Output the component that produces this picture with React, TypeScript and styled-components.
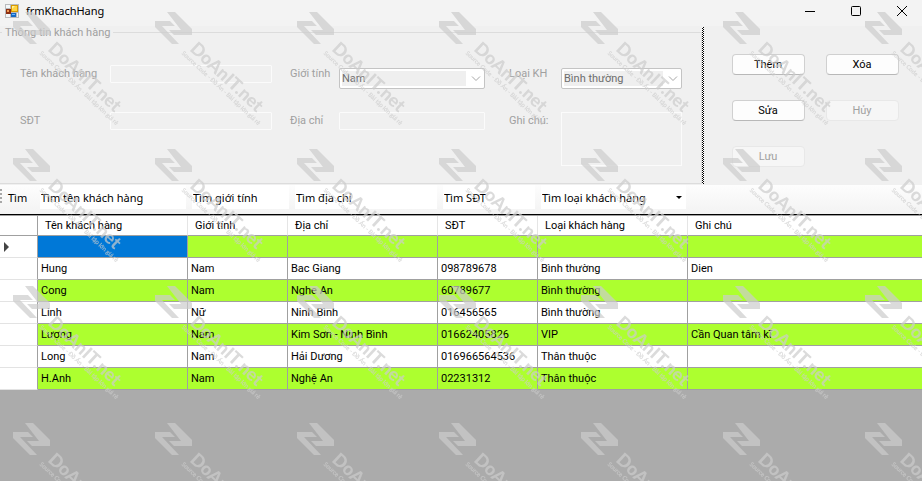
import React from "react";
import styled, { createGlobalStyle } from "styled-components";

const GlobalStyle = createGlobalStyle`
  *, *::before, *::after { box-sizing: border-box; }
  body { margin: 0; font-family: Roboto, "Liberation Sans", sans-serif; font-size: 11px; color: #000; }
  button, input, select, textarea { font: inherit; margin: 0; }
`;

const Window = styled.div`
  position: relative;
  display: flex;
  flex-direction: column;
  min-height: 100vh;
  overflow: hidden;
  background: #ababab;
`;

const TitleBar = styled.header`
  display: flex;
  align-items: center;
  height: 26px;
  padding: 0 0 5px 5px;
  background: #f3f3f3;
  font-family: "Noto Sans", sans-serif;
`;

const Title = styled.h1`
  flex: 1;
  margin: 0 0 0 7px;
  font-size: 11px;
  line-height: 20px;
  font-weight: 400;
`;

const WindowControls = styled.div`
  display: flex;
  gap: 6px;
`;

const WindowButton = styled.button`
  display: flex;
  align-items: center;
  justify-content: center;
  width: 40px;
  height: 20px;
  padding: 0;
  border: 0;
  background: transparent;
`;

const TopPanel = styled.section`
  display: flex;
  height: 159px;
  padding-bottom: 1px;
  background: #f0f0f0;
`;

const CustomerGroup = styled.fieldset`
  flex: 1;
  min-width: 0;
  margin: 0;
  padding: 26px 19px 0 20px;
  border: 1px solid #dcdcdc;
  border-left: 0;
  color: #a0a0a0;
`;

const Legend = styled.legend`
  margin-left: -18px;
  padding: 0 3px;
  line-height: 13px;
`;

const FormGrid = styled.div`
  display: grid;
  grid-template-columns: 90px 162fr 67px 146fr 76px 121fr;
  grid-template-rows: 24px 55px;
  row-gap: 23px;
  align-items: start;
`;

const FieldLabel = styled.label<{ $indent?: number }>`
  padding-left: ${(p) => p.$indent ?? 0}px;
  line-height: 18px;
  white-space: nowrap;
`;

const TextField = styled.input`
  width: 100%;
  height: 18px;
  padding: 0 3px;
  border: 1px solid #fbfbfb;
  border-radius: 1px;
  background: #f0f0f0;
`;

const NoteField = styled.textarea`
  width: 100%;
  height: 54px;
  padding: 3px;
  resize: none;
  border: 1px solid #fbfbfb;
  background: #f0f0f0;
`;

const SelectBox = styled.div`
  position: relative;
  align-self: end;
  svg {
    position: absolute;
    right: 4px;
    top: 8px;
    pointer-events: none;
  }
`;

const Select = styled.select`
  display: block;
  width: 100%;
  height: 21px;
  padding: 0 20px 0 2px;
  appearance: none;
  border: 1px solid #c4c4c4;
  border-radius: 2px;
  color: #6d6d6d;
  opacity: 1;
  background: linear-gradient(#efefef, #efefef) 2px 2px / calc(100% - 20px) calc(100% - 4px) no-repeat #fff;
`;

const Splitter = styled.div`
  width: 2px;
  margin-top: 1px;
  background: repeating-conic-gradient(#000 0 25%, #fff 0 50%) 0 0 / 2px 2px;
`;

const Actions = styled.div`
  display: grid;
  grid-template-columns: 73px 73px;
  grid-auto-rows: 21px;
  gap: 25px 21px;
  width: 218px;
  padding: 28px 0 0 28px;
`;

const ActionButton = styled.button`
  padding: 0 1px 1px 0;
  border: 1px solid #d0d0d0;
  border-bottom-color: #b8b8b8;
  border-radius: 4px;
  background: #fdfdfd;
  color: #000;
  &:disabled {
    border-color: #e8e8e8;
    background: #f6f6f6;
    color: #a0a0a0;
  }
`;

const SearchBar = styled.form`
  display: flex;
  align-items: center;
  height: 30px;
  padding-bottom: 5px;
  border-bottom: 1px solid #000;
  background: linear-gradient(#fdfdfd, #f3f3f3);
  font-family: "Noto Sans", sans-serif;
`;

const Grip = styled.span`
  width: 3px;
  height: 16px;
  background: repeating-linear-gradient(#a8a8a8 0 2px, transparent 2px 4px) 0 0 / 2px 100% no-repeat;
`;

const SearchButton = styled.button`
  width: 34px;
  padding: 0 0 0 5px;
  border: 0;
  background: transparent;
  text-align: left;
`;

const SearchItem = styled.div<{ $width: number }>`
  position: relative;
  display: flex;
  align-items: center;
  width: ${(p) => p.$width}px;
  height: 24px;
  padding: 0 3px;
  & + &::before {
    content: "";
    position: absolute;
    left: -1px;
    height: 16px;
    border-left: 1px solid #bdbdbd;
  }
  svg {
    position: absolute;
    right: 7px;
    pointer-events: none;
  }
`;

const SearchInput = styled.input`
  width: 100%;
  height: 24px;
  padding: 0 1px;
  border: 0;
  background: #fff;
`;

const SearchSelect = styled.select`
  width: 100%;
  height: 24px;
  padding: 0 1px;
  border: 0;
  appearance: none;
  background: #fff;
`;

const Table = styled.table`
  width: 100%;
  table-layout: fixed;
  border-collapse: separate;
  border-spacing: 0;
  background: #fff;
  border-top: 1px solid #a0a0a0;
`;

const HeadCell = styled.th`
  height: 20px;
  padding: 0 7px;
  border-right: 1px solid #e5e5e5;
  border-bottom: 1px solid #a0a0a0;
  text-align: left;
  font-weight: 400;
  line-height: 18px;
  &:first-child { border-right-color: #a0a0a0; }
  &:last-child { border-right: 0; }
`;

const RowHead = styled.th`
  height: 22px;
  padding: 0 0 0 4px;
  border-right: 1px solid #a0a0a0;
  border-bottom: 1px solid #e3e3e3;
  text-align: left;
  svg { display: block; }
`;

const Cell = styled.td<{ $selected?: boolean }>`
  padding: 1px 3px 0;
  border-right: 1px solid #a0a0a0;
  border-bottom: 1px solid #a0a0a0;
  line-height: 20px;
  white-space: nowrap;
  overflow: hidden;
  background: ${(p) => (p.$selected ? "#0078d7" : "transparent")};
  &:last-child { border-right: 0; }
`;

const Row = styled.tr`
  &:nth-child(odd) > td:not([aria-selected="true"]) { background: #adff2f; }
`;

const Overlay = styled.svg`
  position: absolute;
  inset: 0;
  width: 100%;
  height: 100%;
  pointer-events: none;
`;

const customers = [
  ["", "", "", "", "", ""],
  ["Hung", "Nam", "Bac Giang", "098789678", "Bình thường", "Dien"],
  ["Cong", "Nam", "Nghe An", "60789677", "Bình thường", ""],
  ["Linh", "Nữ", "Ninh Bình", "016456565", "Bình thường", ""],
  ["Lượng", "Nam", "Kim Sơn - Ninh Bình", "01662405826", "VIP", "Cần Quan tâm kĩ"],
  ["Long", "Nam", "Hải Dương", "016966564536", "Thân thuộc", ""],
  ["H.Anh", "Nam", "Nghệ An", "02231312", "Thân thuộc", ""],
];

const headings = ["Tên khách hàng", "Giới tính", "Địa chỉ", "SĐT", "Loại khách hàng", "Ghi chú"];

const searches = [
  { label: "Tìm tên khách hàng", width: 152 },
  { label: "Tìm giới tính", width: 103 },
  { label: "Tìm địa chỉ", width: 148 },
  { label: "Tìm SĐT", width: 98 },
];

const FormIcon = () => (
  <svg width="14" height="14" viewBox="0 0 14 14" aria-hidden="true">
    <rect width="14" height="14" fill="#b9bbbd" />
    <path d="M1 1h4v3H1zM1 10h4v3H1zM12 9h1v4h-1z" fill="#f4f6f8" />
    <rect x="6" y="1" width="7" height="7" fill="#d99a00" />
    <rect x="7" y="2" width="5" height="5" fill="#ffd541" />
    <path d="M7 2h3L7 5z" fill="#fff0a0" />
    <rect x="1" y="5" width="5" height="5" fill="#8d2f12" />
    <rect x="2" y="6" width="2" height="2" fill="#ee9a55" />
    <rect x="6" y="9" width="5" height="4" fill="#1769c4" />
    <rect x="7" y="10" width="3" height="1" fill="#69b8ff" />
  </svg>
);

const Chevron = () => (
  <svg width="10" height="6" viewBox="0 0 10 6" fill="none" stroke="#a6a6a6" aria-hidden="true">
    <path d="M1 .5 5 4.5 9 .5" />
  </svg>
);

const Watermark = () => (
  <Overlay aria-hidden="true">
    <defs>
      <pattern id="mark" width="142" height="137" patternUnits="userSpaceOnUse">
        <g fill="#ccc" opacity="0.7">
          <path d="M25 12h8l17 17v6H32l-5-5h12z" />
          <path d="M13 21h15l5 5H20l17 18h-7L13 27z" />
          <g transform="translate(47 50) rotate(43)" fontFamily="Lato, sans-serif">
            <text fontSize="18" fontWeight="900">DoAnIT.net</text>
            <text x="-3" y="8" fontSize="6" stroke="#ccc" strokeWidth="0.2">Source Code - Đồ Án - Bài tập lớn giá rẻ</text>
          </g>
        </g>
      </pattern>
    </defs>
    <rect width="100%" height="100%" fill="url(#mark)" />
  </Overlay>
);

export default function App() {
  return (
    <Window>
      <GlobalStyle />
      <TitleBar>
        <FormIcon />
        <Title>frmKhachHang</Title>
        <WindowControls>
          <WindowButton aria-label="Minimize">
            <svg width="10" height="10"><path d="M0 5.5h10" stroke="#000" /></svg>
          </WindowButton>
          <WindowButton aria-label="Maximize">
            <svg width="10" height="10"><rect x=".5" y=".5" width="9" height="9" rx="1" fill="none" stroke="#000" /></svg>
          </WindowButton>
          <WindowButton aria-label="Close">
            <svg width="10" height="10"><path d="m0 0 10 10M10 0 0 10" stroke="#000" /></svg>
          </WindowButton>
        </WindowControls>
      </TitleBar>

      <TopPanel>
        <CustomerGroup>
          <Legend>Thông tin khách hàng</Legend>
          <FormGrid>
            <FieldLabel htmlFor="name">Tên khách hàng</FieldLabel>
            <TextField id="name" disabled />
            <FieldLabel htmlFor="gender" $indent={18}>Giới tính</FieldLabel>
            <SelectBox>
              <Select id="gender" disabled><option>Nam</option></Select>
              <Chevron />
            </SelectBox>
            <FieldLabel htmlFor="kind" $indent={24}>Loại KH</FieldLabel>
            <SelectBox>
              <Select id="kind" disabled><option>Bình thường</option></Select>
              <Chevron />
            </SelectBox>
            <FieldLabel htmlFor="phone">SĐT</FieldLabel>
            <TextField id="phone" disabled />
            <FieldLabel htmlFor="address" $indent={18}>Địa chỉ</FieldLabel>
            <TextField id="address" disabled />
            <FieldLabel htmlFor="note" $indent={24}>Ghi chú:</FieldLabel>
            <NoteField id="note" disabled />
          </FormGrid>
        </CustomerGroup>
        <Splitter />
        <Actions>
          <ActionButton>Thêm</ActionButton>
          <ActionButton>Xóa</ActionButton>
          <ActionButton>Sửa</ActionButton>
          <ActionButton disabled>Hủy</ActionButton>
          <ActionButton disabled>Lưu</ActionButton>
        </Actions>
      </TopPanel>

      <SearchBar onSubmit={(e) => e.preventDefault()}>
        <Grip />
        <SearchButton>Tìm</SearchButton>
        {searches.map((s) => (
          <SearchItem key={s.label} $width={s.width}>
            <SearchInput aria-label={s.label} defaultValue={s.label} />
          </SearchItem>
        ))}
        <SearchItem $width={151}>
          <SearchSelect aria-label="Tìm loại khách hàng">
            <option>Tìm loại khách hàng</option>
          </SearchSelect>
          <svg width="6" height="3" aria-hidden="true"><path d="M0 0h6L3 3z" /></svg>
        </SearchItem>
      </SearchBar>

      <Table>
        <colgroup>
          <col style={{ width: 38 }} />
          <col style={{ width: 150 }} />
          <col style={{ width: 100 }} />
          <col style={{ width: 150 }} />
          <col style={{ width: 100 }} />
          <col style={{ width: 150 }} />
          <col />
        </colgroup>
        <thead>
          <tr>
            <HeadCell aria-label="Row" />
            {headings.map((h) => <HeadCell key={h} scope="col">{h}</HeadCell>)}
          </tr>
        </thead>
        <tbody>
          {customers.map((row, r) => (
            <Row key={r}>
              <RowHead scope="row">
                {r === 0 && <svg width="6" height="10" aria-label="Current row"><path d="M0 0 5 5 0 10z" fill="#444" /></svg>}
              </RowHead>
              {row.map((value, c) => (
                <Cell key={c} $selected={r === 0 && c === 0} aria-selected={r === 0 && c === 0}>{value}</Cell>
              ))}
            </Row>
          ))}
        </tbody>
      </Table>
      <Watermark />
    </Window>
  );
}
